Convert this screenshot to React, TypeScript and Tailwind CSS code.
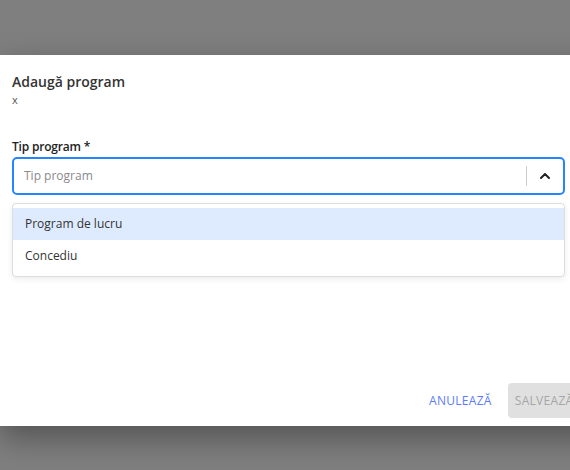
import { ChevronUp } from 'lucide-react';

const options = ['Program de lucru', 'Concediu'];

export default function App() {
  return (
    <div className="relative h-[470px] w-[570px] overflow-hidden bg-[#7f7f7f] font-['Open_Sans',sans-serif]">
      <div className="absolute left-0 top-[55px] h-[371px] w-[620px] bg-white shadow-[0_12px_30px_rgba(0,0,0,0.35)]">
        <div className="w-[577px] px-[12px] pt-[17px]">
          <h2 className="text-[14px] font-semibold leading-[19px] text-[#333]">Adaugă program</h2>
          <div className="mt-[2px] text-[11px] leading-[14px] text-[#555]">x</div>

          <div className="mt-[33px]">
            <label className="block text-[12px] font-semibold leading-[14px] tracking-[-0.2px] text-[#222]">Tip program *</label>
            <div className="mt-[3px] flex h-[38px] items-center rounded-[5px] border-2 border-[#2684ff] bg-white">
              <span className="flex-1 pl-[10px] text-[12px] text-[#8a8a8a]">Tip program</span>
              <span className="h-[20px] w-px bg-[#ccc]" />
              <span className="flex w-[36px] items-center justify-center text-[#222]">
                <ChevronUp size={16} strokeWidth={3} />
              </span>
            </div>

            <div className="mt-[8px] rounded-[4px] border border-[#ddd] bg-white py-[4px] shadow-[0_2px_6px_rgba(0,0,0,0.08)]">
              {options.map((o, i) => (
                <div
                  key={o}
                  className={`flex h-[32px] items-center px-[12px] text-[12px] text-[#333] ${i === 0 ? 'bg-[#deebff]' : ''}`}
                >
                  {o}
                </div>
              ))}
            </div>
          </div>
        </div>

        <div className="absolute left-[421px] top-[328px] flex items-center gap-[8px]">
          <button className="h-[35px] px-[8px] text-[12px] font-medium tracking-[0.3px] text-[#5c7cfa]">ANULEAZĂ</button>
          <button className="h-[35px] rounded-[4px] bg-[#e0e0e0] px-[7px] text-[12px] font-medium tracking-[0.3px] text-[#a6a6a6]">
            SALVEAZĂ
          </button>
        </div>
      </div>
    </div>
  );
}
